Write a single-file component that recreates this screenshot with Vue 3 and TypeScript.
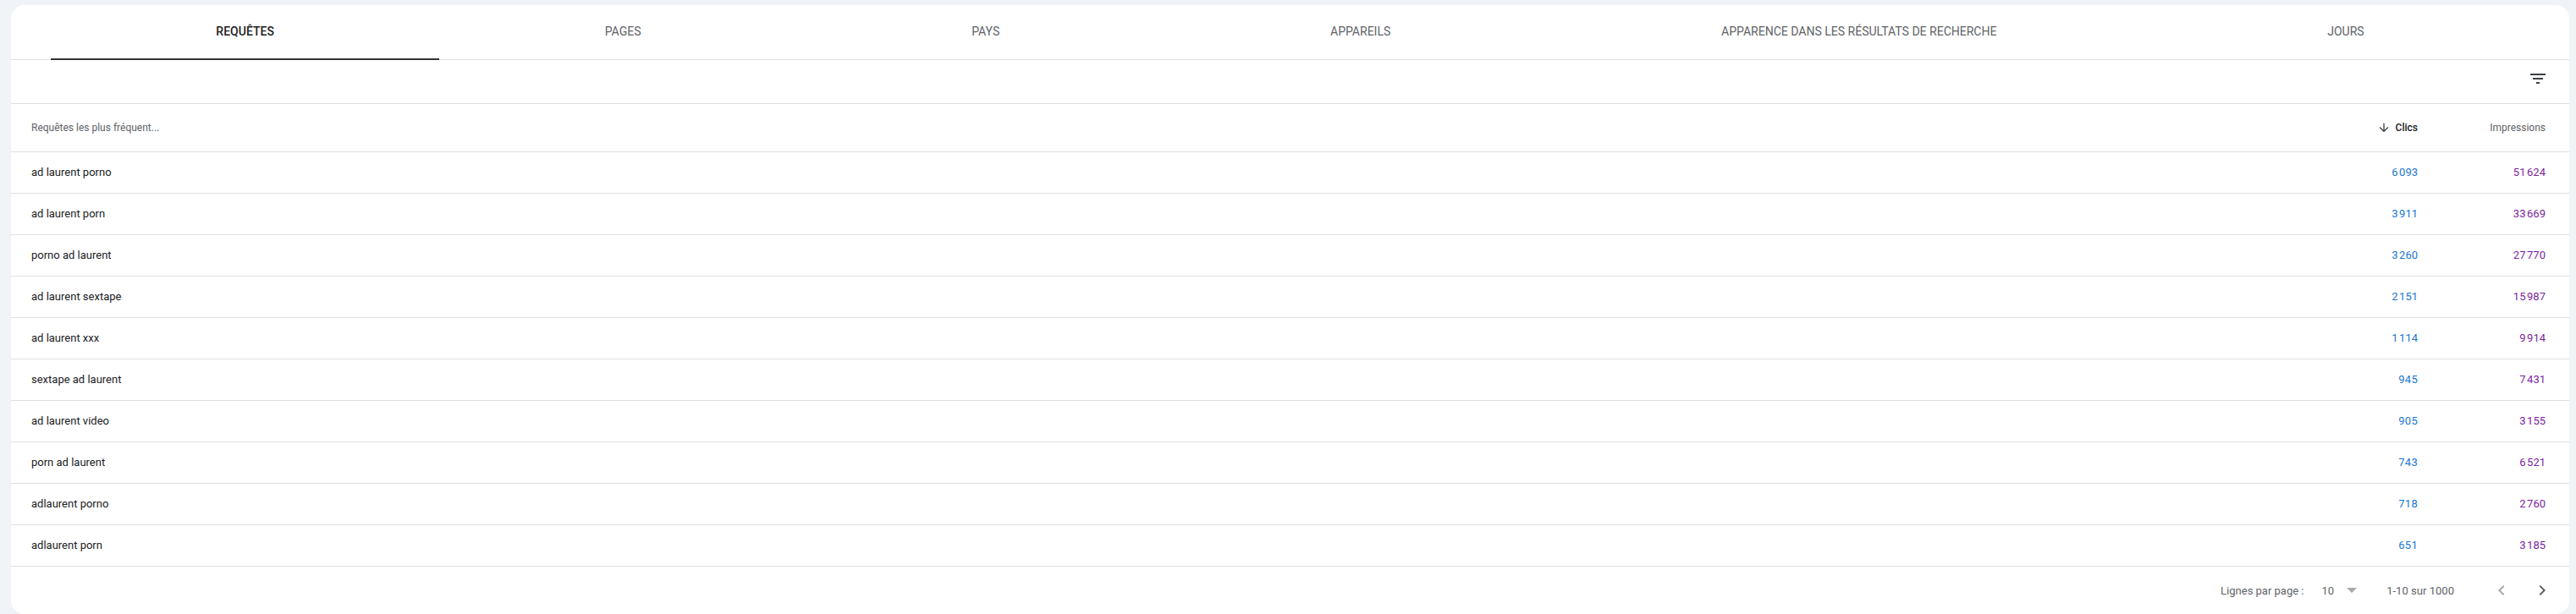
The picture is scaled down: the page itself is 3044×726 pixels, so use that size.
<script setup lang="ts">
const tabs: string[] = ['Requêtes', 'Pages', 'Pays', 'Appareils', 'Apparence dans les résultats de recherche', 'Jours']
const rows: [string, number, number][] = [
  ['ad laurent porno', 6093, 51624],
  ['ad laurent porn', 3911, 33669],
  ['porno ad laurent', 3260, 27770],
  ['ad laurent sextape', 2151, 15987],
  ['ad laurent xxx', 1114, 9914],
  ['sextape ad laurent', 945, 7431],
  ['ad laurent video', 905, 3155],
  ['porn ad laurent', 743, 6521],
  ['adlaurent porno', 718, 2760],
  ['adlaurent porn', 651, 3185],
]
const fmt = (n: number): string => String(n).replace(/\B(?=(\d{3})+$)/g, '\u202f')
</script>

<template>
  <div class="page">
    <main class="card">
      <nav class="tabs">
        <div v-for="(t, i) in tabs" :key="t" class="tab" :class="{ active: i === 0 }">{{ t }}</div>
      </nav>
      <div class="toolbar">
        <svg class="filter" viewBox="0 0 24 24" width="24" height="24"><path d="M10 18h4v-2h-4v2zM3 6v2h18V6H3zm3 7h12v-2H6v2z" /></svg>
      </div>
      <div class="row head">
        <div class="name">Requêtes les plus fréquent...</div>
        <div class="clics sorted">
          <svg viewBox="0 0 24 24" width="16" height="16"><path d="M20 12l-1.41-1.41L13 16.17V4h-2v12.17l-5.58-5.59L4 12l8 8 8-8z" /></svg>
          <span>Clics</span>
        </div>
        <div class="impr">Impressions</div>
      </div>
      <div v-for="r in rows" :key="r[0]" class="row item">
        <div class="name">{{ r[0] }}</div>
        <div class="clics">{{ fmt(r[1]) }}</div>
        <div class="impr">{{ fmt(r[2]) }}</div>
      </div>
      <footer class="pager">
        <span>Lignes par page :</span>
        <span class="size">10</span>
        <span class="caret"></span>
        <span class="range">1-10 sur 1000</span>
        <svg class="prev" viewBox="0 0 24 24" width="24" height="24"><path d="M15.41 7.41L14 6l-6 6 6 6 1.41-1.41L10.83 12z" /></svg>
        <svg class="next" viewBox="0 0 24 24" width="24" height="24"><path d="M10 6L8.59 7.41 13.17 12l-4.58 4.59L10 18l6-6z" /></svg>
      </footer>
    </main>
  </div>
</template>

<style>
html, body { margin: 0; background: #f0f4f9; }
</style>

<style scoped>
.page {
  box-sizing: border-box;
  height: 726px;
  padding: 6px 8px 0 13px;
  background: #f0f4f9;
  font-family: Roboto, "Liberation Sans", sans-serif;
  overflow: hidden;
}
.card {
  height: 720px;
  background: #fff;
  border-radius: 16px;
  display: flex;
  flex-direction: column;
}
.tabs {
  display: flex;
  height: 65px;
  flex: none;
  box-sizing: border-box;
  padding: 0 47px 0 47px;
  border-bottom: 1px solid #e0e0e0;
}
.tab {
  flex: 1 1 auto;
  box-sizing: border-box;
  padding-bottom: 2px;
  display: flex;
  align-items: center;
  justify-content: center;
  font-size: 14px;
  font-weight: 400;
  letter-spacing: .01px;
  text-transform: uppercase;
  color: #5f6368;
  white-space: nowrap;
}
.tab.active {
  color: #202124;
  font-weight: 500;
  border-bottom: 2px solid #333;
  height: 65px;
}
.toolbar {
  height: 52px;
  flex: none;
  box-sizing: border-box;
  display: flex;
  justify-content: flex-end;
  padding: 10px 25px 0 0;
  border-bottom: 1px solid #e0e0e0;
}
.filter { fill: #3c4043; }
.row {
  display: flex;
  align-items: center;
  box-sizing: border-box;
  padding: 0 28px 0 24px;
  border-bottom: 1px solid #e0e0e0;
  flex: none;
}
.head {
  height: 57px;
  font-size: 12px;
  color: #5f6368;
}
.item {
  height: 49px;
  padding-bottom: 2px;
  font-size: 13px;
  color: #202124;
}
.name { flex: 1; }
.clics {
  display: flex;
  align-items: center;
  justify-content: flex-end;
  text-align: right;
}
.impr {
  width: 151px;
  text-align: right;
}
.item .clics { color: #1976d2; letter-spacing: .3px; }
.item .impr { color: #7b1fa2; letter-spacing: .3px; }
.sorted { color: #202124; font-weight: 500; gap: 6px; }
.sorted svg { fill: #3c4043; }
.pager {
  flex: 1;
  display: flex;
  align-items: center;
  justify-content: flex-end;
  padding-right: 20px;
  font-size: 13px;
  color: #5f6368;
}
.size { margin-left: 21px; color: #5f6368; }
.caret {
  margin-left: 15px;
  width: 0;
  height: 0;
  border-left: 6px solid transparent;
  border-right: 6px solid transparent;
  border-top: 6px solid #a8a8a8;
}
.range { margin-left: 35px; letter-spacing: .03px; }
.prev { margin-left: 44px; fill: #a8a8a8; }
.next { margin-left: 24px; fill: #5f6368; }
</style>
